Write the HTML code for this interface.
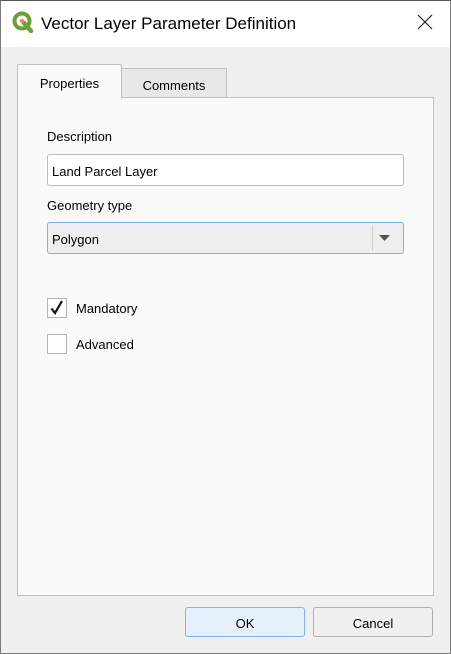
<!DOCTYPE html>
<html><head><meta charset="utf-8"><style>
*{box-sizing:border-box;margin:0;padding:0}
body{width:451px;height:654px;overflow:hidden;font-family:"Liberation Sans",sans-serif;background:#f0f0f0;position:relative;font-size:13px;color:#000}
.win{position:absolute;left:0;top:0;width:451px;height:654px;border:1px solid #7a7a7a;border-top-color:#555}
.title{position:absolute;left:1px;top:1px;width:449px;height:46px;background:#fff}
.title .t{position:absolute;left:40px;top:13px;font-size:17px;color:#000}
.x{position:absolute;left:416px;top:13px}
.abs{position:absolute}
.tab{position:absolute;border:1px solid #c0c0c0;border-bottom:none;font-size:13px;text-align:center}
.panel{position:absolute;left:17px;top:97px;width:417px;height:499px;background:#fafafa;border:1px solid #c0c0c0}
.inp{position:absolute;left:47px;width:357px;height:32px;border:1px solid #bdbdbd;border-radius:3px;background:#fff;padding:9px 0 0 4px}
.cb{position:absolute;left:47px;width:20px;height:20px;border:1px solid #b4b4b4;background:#fff}
.btn{position:absolute;top:607px;height:30px;border:1px solid #b0b0b0;border-radius:3px;background:#f0f0f0;text-align:center;padding-top:8px}
</style></head><body>
<div class="win"></div>
<div class="title">
<svg class="abs" style="left:11px;top:10px" width="22" height="22" viewBox="0 0 22 22"><circle cx="10" cy="10" r="7.5" fill="none" stroke="#6a9f3a" stroke-width="4"/><path d="M12 12 L19 20" stroke="#6a9f3a" stroke-width="4.5" stroke-linecap="round"/><circle cx="10" cy="10" r="2.2" fill="#f08a3a"/></svg>
<div class="t">Vector Layer Parameter Definition</div>
<svg class="x" width="16" height="16" viewBox="0 0 16 16"><path d="M1 1L15 15M15 1L1 15" stroke="#222" stroke-width="1.2"/></svg>
</div>
<div class="tab" style="left:121px;top:68px;width:106px;height:30px;background:#e8e8e8;padding-top:9px">Comments</div>
<div class="panel"></div>
<div class="tab" style="left:17px;top:64px;width:105px;height:34px;background:#fafafa;padding-top:11px;border-radius:2px 2px 0 0">Properties</div>
<div class="abs" style="left:47px;top:129px">Description</div>
<div class="inp" style="top:154px">Land Parcel Layer</div>
<div class="abs" style="left:47px;top:198px">Geometry type</div>
<div class="inp" style="top:222px;background:#efefef;border-color:#7eb4ea">Polygon
<div class="abs" style="left:324px;top:2px;width:1px;height:26px;background:#d0d0d0"></div>
<svg class="abs" style="left:331px;top:12px" width="12" height="7"><path d="M0 0H11L5.5 6Z" fill="#555"/></svg></div>
<div class="cb" style="top:298px"><svg width="18" height="18" viewBox="0 0 18 18"><path d="M3.5 9.5L7 14L14 2" fill="none" stroke="#111" stroke-width="2.2"/></svg></div>
<div class="abs" style="left:76px;top:301px">Mandatory</div>
<div class="cb" style="top:334px"></div>
<div class="abs" style="left:76px;top:337px">Advanced</div>
<div class="btn" style="left:185px;width:120px;border-color:#7eb4ea;background:#e5f0fb">OK</div>
<div class="btn" style="left:313px;width:120px">Cancel</div>
</body></html>
